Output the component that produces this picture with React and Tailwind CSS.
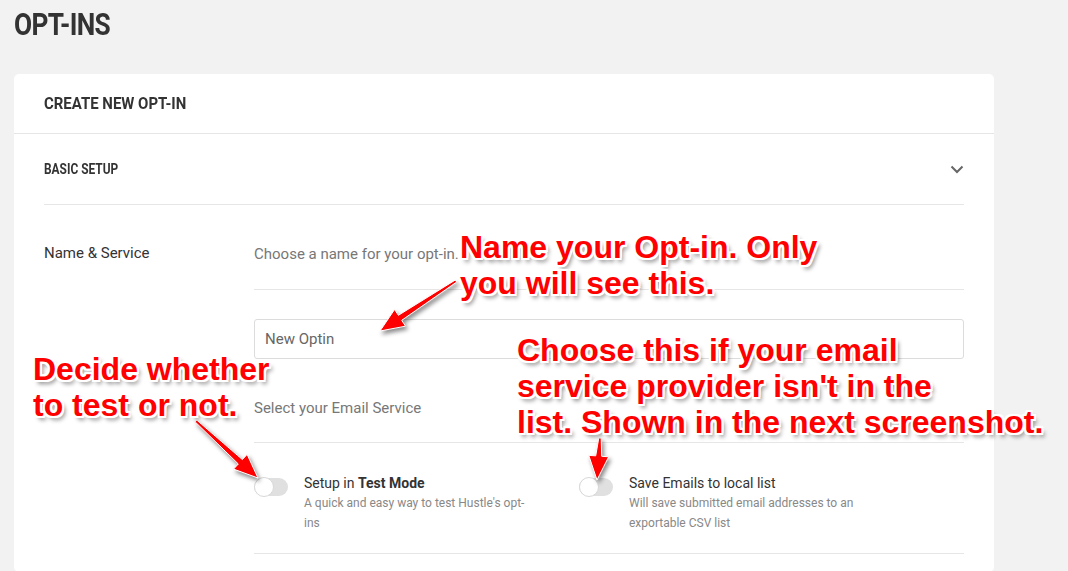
import React from 'react';

const note =
  "absolute font-['Liberation_Sans',Arial,sans-serif] font-bold text-[32px] leading-[36px] text-[#ff0000] whitespace-nowrap [text-shadow:-2px_-2px_0_#fff,2px_-2px_0_#fff,-2px_2px_0_#fff,2px_2px_0_#fff,0_-2px_0_#fff,0_2px_0_#fff,-2px_0_0_#fff,2px_0_0_#fff,3px_4px_4px_rgba(0,0,0,0.45)]";

function Arrow({ x1, y1, x2, y2 }) {
  const dx = x2 - x1;
  const dy = y2 - y1;
  const len = Math.hypot(dx, dy);
  const ux = dx / len;
  const uy = dy / len;
  const px = -uy;
  const py = ux;
  const head = 24;
  const hw = 10;
  const bx = x2 - ux * head;
  const by = y2 - uy * head;
  const pts = [
    [x1 + px * 1.2, y1 + py * 1.2],
    [bx + px * 3, by + py * 3],
    [bx + px * hw, by + py * hw],
    [x2, y2],
    [bx - px * hw, by - py * hw],
    [bx - px * 3, by - py * 3],
    [x1 - px * 1.2, y1 - py * 1.2],
  ]
    .map((p) => p.join(','))
    .join(' ');
  return (
    <polygon
      points={pts}
      fill="#ff0000"
      stroke="#fff"
      strokeWidth="1"
      style={{ filter: 'drop-shadow(2px 3px 2px rgba(0,0,0,0.45))' }}
    />
  );
}

function Toggle() {
  return (
    <div className="relative w-[34px] h-[18px] mt-[5px] shrink-0 rounded-full bg-[#e0e0e0]">
      <div className="absolute left-0 top-[-1px] w-[20px] h-[20px] rounded-full bg-white border border-[#d8d8d8]" />
    </div>
  );
}

export default function App() {
  return (
    <div className="relative w-[1068px] h-[571px] overflow-hidden bg-[#f2f2f2] font-['Roboto',sans-serif] text-[#333]">
      <div className="pl-[14px] pt-[6px] h-[74px]">
        <h1 className="inline-block origin-left scale-x-[0.82] text-[32px] leading-[36px] font-bold text-[#333] tracking-tight">
          OPT-INS
        </h1>
      </div>

      <div className="ml-[14px] w-[980px] bg-white rounded-[5px]">
        <div className="h-[60px] px-[30px] flex items-center border-b border-[#e6e6e6]">
          <h2 className="inline-block origin-left scale-x-[0.88] text-[17px] font-bold text-[#333]">
            CREATE NEW OPT-IN
          </h2>
        </div>

        <div className="px-[30px]">
          <div className="h-[71px] flex items-center justify-between border-b border-[#e6e6e6]">
            <h3 className="inline-block origin-left scale-x-[0.85] text-[14px] font-bold text-[#333]">
              BASIC SETUP
            </h3>
            <svg width="14" height="9" viewBox="0 0 14 9">
              <path d="M1.5 1.5 L7 7 L12.5 1.5" fill="none" stroke="#666" strokeWidth="2" />
            </svg>
          </div>

          <div className="flex pt-[38px] pb-[18px]">
            <div className="w-[210px] text-[15px] leading-[20px] text-[#333]">Name &amp; Service</div>
            <div className="flex-1">
              <div className="h-[47px] flex items-start pt-[1px] text-[15px] leading-[20px] text-[#777] border-b border-[#e6e6e6]">
                Choose a name for your opt-in.
              </div>
              <div className="pt-[29px]">
                <div className="h-[40px] border border-[#dcdcdc] rounded-[3px] px-[10px] flex items-center text-[15px] text-[#666]">
                  New Optin
                </div>
              </div>
              <div className="h-[84px] flex items-center pt-[16px] text-[15px] text-[#777] border-b border-[#e6e6e6]">
                Select your Email Service
              </div>
              <div className="h-[111px] pt-[30px] flex border-b border-[#e6e6e6]">
                <div className="w-[325px] flex gap-[16px]">
                  <Toggle />
                  <div>
                    <div className="text-[14px] leading-[20px] text-[#333]">
                      Setup in <span className="font-bold">Test Mode</span>
                    </div>
                    <div className="text-[12px] leading-[20px] text-[#888] w-[225px]">
                      A quick and easy way to test Hustle's opt-ins
                    </div>
                  </div>
                </div>
                <div className="flex gap-[16px]">
                  <Toggle />
                  <div>
                    <div className="text-[14px] leading-[20px] text-[#333]">Save Emails to local list</div>
                    <div className="text-[12px] leading-[20px] text-[#888] w-[230px]">
                      Will save submitted email addresses to an exportable CSV list
                    </div>
                  </div>
                </div>
              </div>
            </div>
          </div>
        </div>
      </div>

      <svg className="absolute inset-0 pointer-events-none" width="1068" height="571">
        <Arrow x1={456} y1={281} x2={380} y2={331} />
        <Arrow x1={196} y1={421} x2={258} y2={478} />
        <Arrow x1={600} y1={438} x2={597} y2={480} />
      </svg>

      <div className={note} style={{ left: 460, top: 229 }}>
        Name your Opt-in. Only
        <br />
        you will see this.
      </div>
      <div className={note} style={{ left: 33, top: 351 }}>
        Decide whether
        <br />
        to test or not.
      </div>
      <div className={note} style={{ left: 517, top: 332 }}>
        Choose this if your email
        <br />
        service provider isn't in the
        <br />
        list. Shown in the next screenshot.
      </div>
    </div>
  );
}
